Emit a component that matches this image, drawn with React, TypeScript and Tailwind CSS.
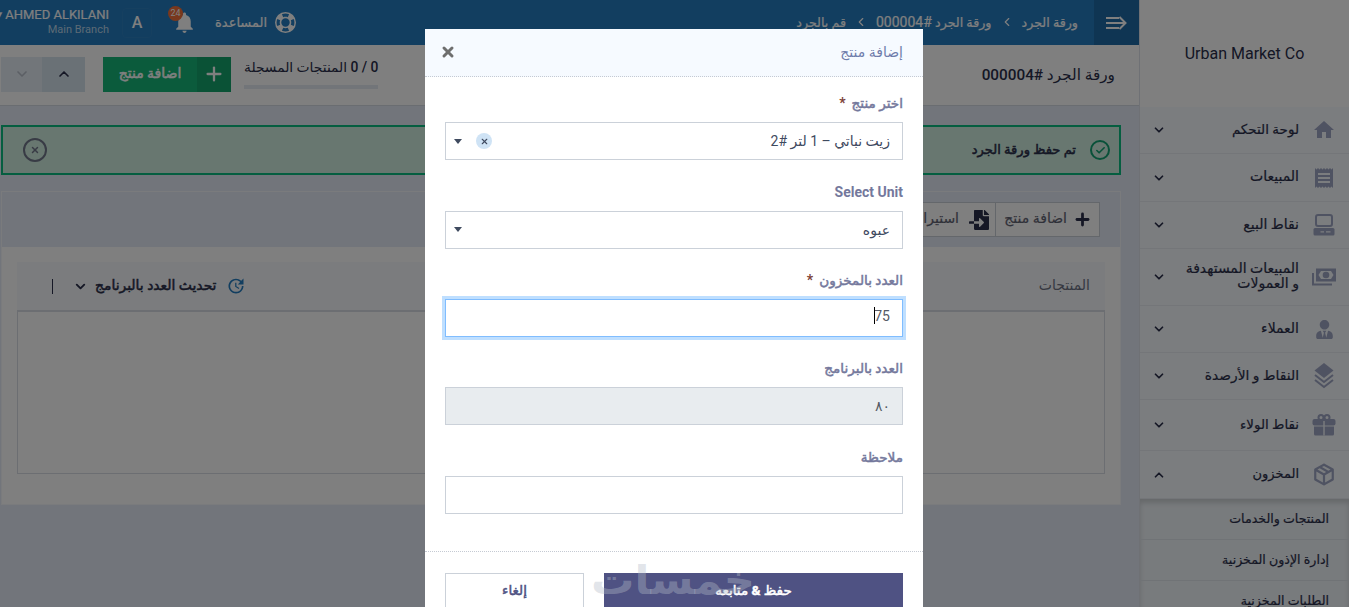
import type { ReactNode } from "react";
import { FaFileImport, FaUserTie } from "react-icons/fa";
import { MdHome, MdNotifications, MdReceipt, MdUpdate } from "react-icons/md";
import { Check, ChevronDown, ChevronLeft, ChevronUp, Plus, X } from "lucide-react";

const PosIcon = () => (
  <svg viewBox="0 0 22 22" className="size-[22px]">
    <rect x="3" y="1" width="16" height="11" rx="2" fill="none" stroke="currentColor" strokeWidth="2" />
    <rect x="0.500" y="14" width="21" height="7.500" rx="1.500" fill="currentColor" />
    <path d="M7.500 17.800h3.500M13 17.800h4.500" stroke="#f6fafe" strokeWidth="1.200" />
  </svg>
);

const CashIcon = () => (
  <svg viewBox="0 0 24 18" className="h-[18px] w-6">
    <rect x="4" y="0.500" width="20" height="13" fill="currentColor" />
    <path d="M6.500 7L9 3h10l2.500 4-2.500 4H9z" fill="#f6fafe" />
    <circle cx="14" cy="7" r="3.300" fill="currentColor" />
    <path d="M1 5v11.500h19" fill="none" stroke="currentColor" strokeWidth="2" />
  </svg>
);

const LayersIcon = () => (
  <svg viewBox="0 0 20 26" className="h-[26px] w-5">
    <path d="M10 0l9.500 7.500L10 15 .5 7.500z" fill="currentColor" />
    <path d="M1 12l9 7 9-7M1 17l9 7 9-7" fill="none" stroke="currentColor" strokeWidth="2" />
  </svg>
);

const GiftIcon = () => (
  <svg viewBox="0 0 24 22" className="h-[22px] w-6">
    <circle cx="9" cy="3.500" r="2.500" fill="none" stroke="currentColor" strokeWidth="2" />
    <circle cx="15" cy="3.500" r="2.500" fill="none" stroke="currentColor" strokeWidth="2" />
    <rect x="0.500" y="5" width="23" height="6.500" rx="2" fill="currentColor" />
    <path d="M2 12.500h20V20a1.500 1.500 0 0 1-1.500 1.500h-17A1.500 1.500 0 0 1 2 20z" fill="currentColor" />
    <path d="M12 7v14.500" stroke="#f6fafe" strokeWidth="1.400" />
  </svg>
);

const BoxIcon = () => (
  <svg viewBox="2 1.500 20 21" className="h-[23px] w-[22px]" fill="currentColor">
    <path d="M21,16.5C21,16.88 20.79,17.21 20.47,17.38L12.57,21.82C12.41,21.94 12.21,22 12,22C11.79,22 11.59,21.94 11.43,21.82L3.53,17.38C3.21,17.21 3,16.88 3,16.5V7.5C3,7.12 3.21,6.79 3.53,6.62L11.43,2.18C11.59,2.06 11.79,2 12,2C12.21,2 12.41,2.06 12.57,2.18L20.47,6.62C20.79,6.79 21,7.12 21,7.5V16.5M12,4.15L10.11,5.22L16,8.61L17.96,7.5L12,4.15M6.04,7.5L12,10.85L13.96,9.75L8.08,6.35L6.04,7.5M5,15.91L11,19.29V12.58L5,9.21V15.91M19,15.91V9.21L13,12.58V19.29L19,15.91Z" />
  </svg>
);

const LifebuoyIcon = () => (
  <svg viewBox="2 2 20 20" className="size-[21px]" fill="currentColor">
    <path d="M19.79,15.41C20.74,13.24 20.74,10.74 19.79,8.59L17.05,9.83C17.65,11.21 17.65,12.78 17.06,14.17L19.79,15.41M15.42,4.21C13.25,3.26 10.76,3.26 8.59,4.21L9.83,6.94C11.22,6.35 12.79,6.35 14.18,6.95L15.42,4.21M4.21,8.58C3.26,10.76 3.26,13.24 4.21,15.42L6.95,14.17C6.35,12.79 6.35,11.21 6.95,9.82L4.21,8.58M8.59,19.79C10.76,20.74 13.25,20.74 15.42,19.78L14.18,17.05C12.8,17.65 11.22,17.65 9.84,17.06L8.59,19.79M12,2A10,10 0 0,1 22,12A10,10 0 0,1 12,22A10,10 0 0,1 2,12A10,10 0 0,1 12,2M12,8A4,4 0 0,0 8,12A4,4 0 0,0 12,16A4,4 0 0,0 16,12A4,4 0 0,0 12,8Z" />
  </svg>
);

const MenuArrowIcon = () => (
  <svg viewBox="0 0 21 14" className="h-3.5 w-[21px]" fill="none" stroke="currentColor" strokeWidth="2">
    <path d="M0 2h13M0 7h19M0 12h13M13.500 1l6 6-6 6" />
  </svg>
);

const menu = [
  { label: "لوحة التحكم", icon: <MdHome size={24} />, height: "h-[47px]", text: "text-[13.500px]" },
  { label: "المبيعات", icon: <MdReceipt size={24} />, height: "h-12", text: "text-sm" },
  { label: "نقاط البيع", icon: <PosIcon />, height: "h-[47px]", text: "text-sm" },
  { label: "المبيعات المستهدفة و العمولات", icon: <CashIcon />, height: "h-[57px]", text: "text-sm" },
  { label: "العملاء", icon: <FaUserTie size={19} />, height: "h-[47px]", text: "text-sm" },
  { label: "النقاط و الأرصدة", icon: <LayersIcon />, height: "h-[47px]", text: "text-[13.800px]" },
  { label: "نقاط الولاء", icon: <GiftIcon />, height: "h-[51px]", text: "text-[13.400px]" },
  { label: "المخزون", icon: <BoxIcon />, height: "h-12", text: "text-[13px]", open: true },
];

const subMenu = ["المنتجات والخدمات", "إدارة الإذون المخزنية", "الطلبات المخزنية"];

function Sidebar() {
  return (
    <aside className="flex w-[210px] shrink-0 flex-col border-l border-[#dfe3ea] bg-[#f6fafe] text-[#2a2e4a]">
      <div className="flex h-[107px] shrink-0 items-center justify-center bg-white text-base">Urban Market Co</div>
      {menu.map((item) => (
        <div key={item.label} className={`flex shrink-0 items-center border-b border-[#e9edf2] ${item.height}`}>
          <span className="flex w-[50px] shrink-0 justify-center text-[#9fa6c4]">{item.icon}</span>
          <span className={`flex-1 pb-0.5 leading-[15px] font-medium [-webkit-text-stroke:0.2px] ${item.text}`}>{item.label}</span>
          <span className="flex w-[38px] shrink-0 justify-center">
            {item.open ? <ChevronUp size={14} strokeWidth={3} /> : <ChevronDown size={14} strokeWidth={3} />}
          </span>
        </div>
      ))}
      <div className="flex-1 bg-[#f1f6fa] shadow-[inset_0_4px_5px_rgba(0,0,0,0.15)]">
        {subMenu.map((label) => (
          <div
            key={label}
            className="flex h-[41px] items-center border-b border-[#e1e6ed] pr-5 text-[12.600px] font-medium [-webkit-text-stroke:0.2px]"
          >
            {label}
          </div>
        ))}
      </div>
    </aside>
  );
}

function TopBar() {
  return (
    <header className="flex h-[45px] items-center bg-[#247cc0] text-[13px] text-white">
      <div className="flex h-full w-[45px] items-center justify-center bg-[#1f6aa6]">
        <MenuArrowIcon />
      </div>
      <nav className="flex items-center gap-2 pr-4 text-[12.700px] [-webkit-text-stroke:0.2px]">
        <span>ورقة الجرد</span>
        <ChevronLeft size={14} />
        <span>
          ورقة الجرد <span className="text-sm">#000004</span>
        </span>
        <ChevronLeft size={14} />
        <span>قم بالجرد</span>
      </nav>
      <div className="mr-auto flex items-center">
        <LifebuoyIcon />
        <span className="mr-2 ml-[18px] [-webkit-text-stroke:0.2px]">المساعدة</span>
        <div className="relative ml-5">
          <MdNotifications size={25} />
          <span className="absolute top-[-4px] right-[14px] flex size-[15px] items-center justify-center rounded-full bg-[#f0703a] text-[9px]">
            24
          </span>
        </div>
        <span className="flex size-[30px] items-center justify-center rounded border border-[#2c80c1] text-base font-medium">A</span>
        <div className="flex w-[122px] flex-col items-start pr-[13px] pb-0.5 leading-[15px] whitespace-nowrap">
          <span className="text-[13px] [-webkit-text-stroke:0.2px]" dir="ltr">
            ▾ AHMED ALKILANI
          </span>
          <span className="text-[11px] text-[#b9d5ea]">Main Branch</span>
        </div>
      </div>
    </header>
  );
}

function PageHead() {
  return (
    <div className="flex h-[61px] items-center border-b border-[#d5dae2] bg-white pr-6 pl-px text-[#2a2e4a]">
      <h1 className="text-[15.300px] font-medium">ورقة الجرد #000004</h1>
      <div className="mr-auto flex flex-col gap-2 pb-1 text-[13.800px] font-medium">
        <span>0 / 0 المنتجات المسجلة</span>
        <span className="h-1 bg-[#e4ebf2]" />
      </div>
      <button className="mr-[13px] mb-0.5 flex h-[35px] w-32 items-center bg-[#16b678] text-sm text-white [-webkit-text-stroke:0.5px]">
        <span className="flex h-full w-[34px] items-center justify-center bg-[#14a56d]">
          <Plus size={22} strokeWidth={2.5} />
        </span>
        <span className="flex-1 pb-0.5 text-center">اضافة منتج</span>
      </button>
      <div className="mr-[18px] mb-0.5 flex h-[35px] w-[84px]">
        <span className="flex w-[43px] items-center justify-center bg-[#d5e2ec]">
          <ChevronUp size={16} strokeWidth={2.5} />
        </span>
        <span className="flex flex-1 items-center justify-center bg-[#e5edf4] text-[#b8bfcb]">
          <ChevronDown size={16} strokeWidth={2.5} />
        </span>
      </div>
    </div>
  );
}

function StockSheet() {
  return (
    <section className="mt-4 h-[314px] border border-[#f4f7fa] bg-white text-sm">
      <div className="flex h-[55px] items-center bg-[#e4ebf6] pr-5">
        <div className="flex h-[35px] border border-[#c9ced6] bg-white text-[#5f6272] [-webkit-text-stroke:0.2px]">
          <span className="flex w-[103px] items-center gap-1.5 pr-[7px]">
            <Plus size={19} strokeWidth={3.5} className="text-[#2a2e4a]" />
            <span className="pb-1">اضافة منتج</span>
          </span>
          <span className="flex w-28 items-center gap-2.5 border-r border-[#c9ced6] pr-1.5">
            <FaFileImport size={20} className="text-[#2a2e4a]" />
            <span className="pb-1">استيراد</span>
          </span>
        </div>
      </div>
      <div className="px-[15px] pt-[15px]">
        <div className="flex h-[50px] items-center border-b-2 border-[#d8dde5] bg-[#f6f9fc] pr-[15px] pl-[35px]">
          <span className="pb-0.5 text-[#6d7183]">المنتجات</span>
          <div className="mr-auto flex items-center text-[13.900px] text-[#2a2e4a] [-webkit-text-stroke:0.5px]">
            <MdUpdate size={20} className="ml-2.5 text-[#247cc0]" />
            <span>تحديث العدد بالبرنامج</span>
            <ChevronDown size={15} strokeWidth={3} className="mr-[7px]" />
            <span className="mr-5 h-[15px] w-px bg-[#2a2e4a]" />
          </div>
        </div>
        <div className="h-[162px] border border-t-0 border-[#d8dde5]" />
      </div>
    </section>
  );
}

interface FieldProps {
  label: string;
  required?: boolean;
  latin?: boolean;
  children: ReactNode;
}

function Field({ label, required, latin, children }: FieldProps) {
  return (
    <div className="h-[88.300px]">
      <label className="flex h-[27px] items-start gap-1.5 leading-[17px] text-[#74789c]">
        <span className={latin ? "text-sm leading-[17px] font-bold" : "text-[13.600px] leading-[17px] [-webkit-text-stroke:0.5px]"}>
          {label}
        </span>
        {required && <span className="text-sm leading-[17px] font-bold text-[#7d4238]">*</span>}
      </label>
      {children}
    </div>
  );
}

function AddProductModal() {
  return (
    <div className="relative flex h-[620px] w-[498px] flex-col bg-white text-sm text-[#3f4a5f]">
      <div className="flex h-12 shrink-0 items-center justify-between border-b border-dotted border-[#c5cad3] bg-[#f6faff] px-5 pb-0.5 text-[#6f7cab]">
        <span>إضافة منتج</span>
        <X size={16} strokeWidth={4.5} className="-ml-[5px] text-[#6e6e6e]" />
      </div>
      <div className="h-[474px] shrink-0 px-5 pt-[18.400px]">
        <Field label="اختر منتج" required>
          <div className="flex h-[38px] items-center border border-[#cbd1d9] pr-3 pl-2">
            <span>زيت نباتي – 1 لتر #2</span>
            <span className="mr-auto ml-3.5 flex size-4 items-center justify-center rounded-full bg-[#cfe3f5]">
              <X size={9} strokeWidth={3} />
            </span>
            <span className="border-x-4 border-t-[5px] border-x-transparent border-t-[#3f4a5f]" />
          </div>
        </Field>
        <Field label="Select Unit" latin>
          <div className="flex h-[38px] items-center justify-between border border-[#cbd1d9] pr-3 pl-2">
            <span>عبوه</span>
            <span className="border-x-4 border-t-[5px] border-x-transparent border-t-[#3f4a5f]" />
          </div>
        </Field>
        <Field label="العدد بالمخزون" required>
          <div className="flex h-[38px] items-center border border-[#80bdff] pr-3 pb-1 text-[#555b66] ring-3 ring-[#bfdfff]">
            <span>75</span>
            <span className="-mr-px h-[17px] w-px bg-black" />
          </div>
        </Field>
        <Field label="العدد بالبرنامج">
          <div className="flex h-[38px] items-center border border-[#cbd1d9] bg-[#e8ecef] pr-3 text-[#555b66]">٨٠</div>
        </Field>
        <Field label="ملاحظة">
          <div className="h-[38px] border border-[#cbd1d9]" />
        </Field>
      </div>
      <div className="flex gap-5 border-t border-dotted border-[#c5cad3] px-5 pt-[21px] text-[13.500px] [-webkit-text-stroke:0.5px]">
        <button className="h-[38px] flex-1 bg-[#4f5283] pb-[3px] text-white">
          حفظ <span className="font-bold">&amp;</span> متابعه
        </button>
        <button className="h-[38px] w-[139px] border border-[#cbd1d9] pb-[3px] text-[#4f5283]">إلغاء</button>
      </div>
      <svg className="absolute top-[524px] left-[160px] h-[54px] w-[170px] overflow-visible" direction="rtl">
        <text x="170" y="41" fontSize="40" textLength="164" lengthAdjust="spacingAndGlyphs" fontWeight="700" fill="#b4bcc8" fillOpacity="0.4">
          خمسات
        </text>
      </svg>
    </div>
  );
}

export default function App() {
  return (
    <div dir="rtl" className="relative flex h-[607px] w-[1349px] overflow-hidden bg-[#e4ebf6] font-[Roboto,'DejaVu_Sans',sans-serif]">
      <Sidebar />
      <div className="flex w-[1139px] flex-col">
        <TopBar />
        <PageHead />
        <main className="pt-[19px] pr-[18px] pl-px">
          <div className="flex h-[50px] items-center border-2 border-[#0abc80] bg-[#d0eee0] pr-[9px] pl-5 text-[13.100px] text-[#2a2e4a]">
            <span className="flex size-5 items-center justify-center rounded-full border-2 border-[#12a272] text-[#12a272]">
              <Check size={11} strokeWidth={3.5} />
            </span>
            <span className="mr-[14px] [-webkit-text-stroke:0.5px]">تم حفظ ورقة الجرد</span>
            <span className="mr-auto flex size-6 items-center justify-center rounded-full border-2 border-[#70768a] text-[#70768a]">
              <X size={10} strokeWidth={3.5} />
            </span>
          </div>
          <StockSheet />
        </main>
      </div>
      <div className="absolute inset-0 flex justify-center bg-black/50 pt-[29px] pr-px">
        <AddProductModal />
      </div>
    </div>
  );
}
